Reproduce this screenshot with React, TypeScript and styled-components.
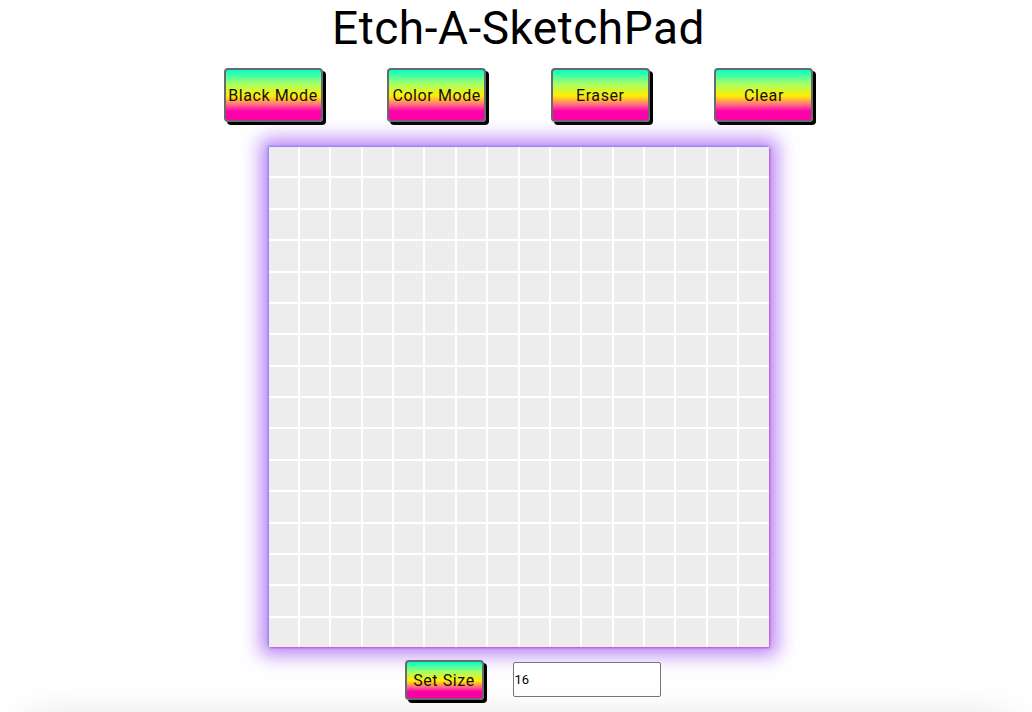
import {FC, useState} from 'react';
import styled, {createGlobalStyle} from "styled-components";

const GlobalStyle = createGlobalStyle`
  body {
    margin: 0;
    background: #fff;
    font-family: "Roboto", "Liberation Sans", sans-serif;
    overflow: hidden;
  }
`;

const Page = styled.div`
  display: flex;
  flex-direction: column;
  align-items: center;
  padding-left: 5px;
`;

const Title = styled.h1`
  margin: 0;
  font-size: 46px;
  line-height: 56px;
  font-weight: 400;
  color: #000;
  letter-spacing: 0.5px;
`;

const Toolbar = styled.div`
  display: flex;
  justify-content: space-between;
  width: 590px;
  margin-top: 12px;
`;

const RainbowButton = styled.button<{ $w: number; $h: number }>`
  width: ${p => p.$w}px;
  height: ${p => p.$h}px;
  padding: 0;
  border: 2px solid #6a6a6a;
  border-radius: 4px;
  background: linear-gradient(#00ffcc 0%, #a8ff66 28%, #ffee00 52%, #ff6688 70%, #ff00aa 82%, #ff00aa 100%);
  box-shadow: 3px 3px 0 #000;
  font-family: "Roboto", "Liberation Sans", sans-serif;
  font-size: 16px;
  letter-spacing: 0.6px;
  white-space: nowrap;
  color: #111;
  cursor: pointer;
`;

const Board = styled.div`
  display: grid;
  grid-template-columns: repeat(16, 1fr);
  grid-template-rows: repeat(16, 1fr);
  gap: 2px;
  width: 500px;
  height: 500px;
  margin-top: 25px;
  background: #fff;
  box-shadow: -1px -1px 2px #7f7fff, 1px 1px 2px #c050d0, 0 0 18px 8px rgba(160, 90, 240, 0.75);
`;

const Cell = styled.div`
  background: #ededed;
`;

const Controls = styled.div`
  display: flex;
  align-items: center;
  gap: 29px;
  margin-top: 13px;
  margin-left: 28px;
`;

const SizeInput = styled.input`
  box-sizing: border-box;
  width: 148px;
  height: 35px;
  margin-top: -2px;
  padding: 0 1px;
  border: 1px solid #767676;
  border-radius: 2px;
  font-family: "Roboto", "Liberation Sans", sans-serif;
  font-size: 13px;
  color: #000;
`;

const Footer = styled.div`
  width: 1000px;
  height: 60px;
  margin-top: 22px;
  border-radius: 30px;
  background: #fff;
  box-shadow: 0 0 40px rgba(0, 0, 0, 0.16);
`;

const App: FC = () => {
    const [size, setSize] = useState('16');
    const cells = Array.from({length: 256});

    return (
        <Page>
            <GlobalStyle/>
            <Title>Etch-A-SketchPad</Title>

            <Toolbar>
                <RainbowButton $w={99} $h={54}>Black Mode</RainbowButton>
                <RainbowButton $w={99} $h={54}>Color Mode</RainbowButton>
                <RainbowButton $w={99} $h={54}>Eraser</RainbowButton>
                <RainbowButton $w={99} $h={54}>Clear</RainbowButton>
            </Toolbar>

            <Board>
                {cells.map((_, i) => <Cell key={i}/>)}
            </Board>

            <Controls>
                <RainbowButton $w={79} $h={40}>Set Size</RainbowButton>
                <SizeInput value={size} onChange={(e) => setSize(e.target.value)}/>
            </Controls>

            <Footer/>
        </Page>
    );
};

export default App;
